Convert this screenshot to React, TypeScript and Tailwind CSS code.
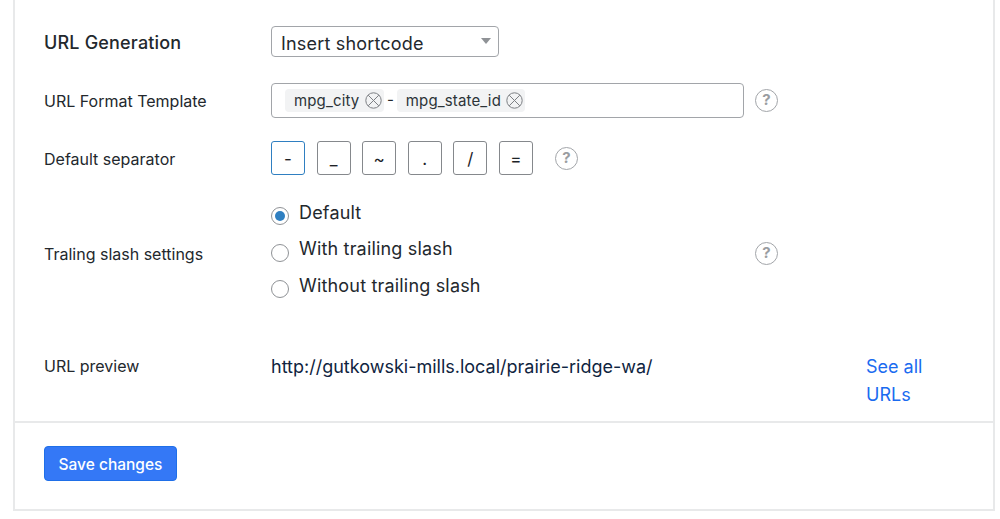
const separators = ['-', '_', '~', '.', '/', '='];

function HelpIcon() {
  return (
    <span className="flex h-[23px] w-[23px] shrink-0 items-center justify-center rounded-full border border-[#a2a5a9] text-[15px] font-bold text-[#9a9da1]">
      ?
    </span>
  );
}

function CloseCircle() {
  return (
    <svg width="17" height="17" viewBox="0 0 17 17" fill="none" stroke="#7c7f83" strokeWidth="1" className="shrink-0">
      <circle cx="8.5" cy="8.5" r="7.7" />
      <path d="M3.2 3.2 13.8 13.8M13.8 3.2 3.2 13.8" />
    </svg>
  );
}

function Tag({ label }: { label: string }) {
  return (
    <span className="flex h-[23px] items-center gap-[5.5px] rounded-[4px] bg-[#f2f3f4] pl-[9px] pr-[2px] text-[15px] tracking-[0.01em] text-[#2c3338]">
      <span className="pt-[1px]">{label}</span>
      <CloseCircle />
    </span>
  );
}

function Radio({ label, checked }: { label: string; checked?: boolean }) {
  return (
    <label className="flex h-[36.5px] items-center gap-[10px] text-[18px] tracking-[0.01em] text-[#23282d]">
      <span className="mt-[5px] flex h-[18px] w-[18px] items-center justify-center rounded-full border border-[#8f9296] bg-white">
        {checked && <span className="h-[10px] w-[10px] rounded-full bg-[#2f7fc1]" />}
      </span>
      <span className="-mt-[3px]">{label}</span>
    </label>
  );
}

export default function App() {
  return (
    <div className="h-[519px] w-[1000px] overflow-hidden bg-white font-['Inter',sans-serif] text-[#23282d]">
      <div className="ml-[13px] h-[511px] w-[982px] border-x-2 border-b-2 border-[#e8e9ea] pt-[26px]">
        {/* form rows */}
        <div className="h-[395px] pl-[29px]">
          <div className="flex h-[31px] items-center">
            <div className="w-[227px] pt-[2px] text-[18px] font-medium tracking-[0.01em]">URL Generation</div>
            <div className="flex h-[31px] w-[228px] items-center justify-between rounded-[4px] border border-[#a2a5a9] pl-[9px] pr-[7px] text-[18px] tracking-[0.01em]">
              <span className="mt-[3px]">Insert shortcode</span>
              <span className="mb-[2px] h-0 w-0 border-x-[5px] border-t-[6px] border-x-transparent border-t-[#8f9296]" />
            </div>
          </div>

          <div className="mt-[26px] flex h-[35px] items-center">
            <div className="w-[227px] text-[16px]">URL Format Template</div>
            <div className="flex h-[35px] w-[473px] items-center rounded-[4px] border border-[#a2a5a9] pl-[13px]">
              <Tag label="mpg_city" />
              <span className="mx-[3px] text-[15px]">-</span>
              <Tag label="mpg_state_id" />
            </div>
            <div className="ml-[11px]">
              <HelpIcon />
            </div>
          </div>

          <div className="mt-[23px] flex h-[34px] items-center">
            <div className="w-[227px] pt-[2px] text-[16px]">Default separator</div>
            <div className="flex gap-[11.6px]">
              {separators.map((s, i) => (
                <button
                  key={s}
                  className={`flex h-[34px] w-[34px] items-center justify-center rounded-[3px] border pt-[3px] text-[17px] text-[#1d2327] ${
                    i === 0 ? 'border-[#2f7fc1]' : 'border-[#85888c]'
                  }`}
                >
                  {s}
                </button>
              ))}
            </div>
            <div className="ml-[22px]">
              <HelpIcon />
            </div>
          </div>

          <div className="mt-[24px] flex h-[108px] items-center">
            <div className="w-[227px] pt-[2px] text-[16px]">Traling slash settings</div>
            <div className="mb-[6px] w-[484px]">
              <Radio label="Default" checked />
              <Radio label="With trailing slash" />
              <Radio label="Without trailing slash" />
            </div>
            <HelpIcon />
          </div>

          <div className="mt-[46px] flex items-start">
            <div className="w-[227px] text-[16px] leading-[26px]">URL preview</div>
            <div className="w-[595px] text-[18px] leading-[28px] text-[#0f2440]">http://gutkowski-mills.local/prairie-ridge-wa/</div>
            <a className="w-[70px] text-[18px] leading-[28px] text-[#1a6bf0]">See all URLs</a>
          </div>
        </div>

        <div className="border-t-2 border-[#e8e9ea] pl-[29px] pt-[23px]">
          <button className="h-[35px] w-[133px] rounded-[4px] border border-[#1f6fe8] bg-[#3478f6] pt-[3px] text-[15.5px] font-medium text-white">
            Save changes
          </button>
        </div>
      </div>
    </div>
  );
}
